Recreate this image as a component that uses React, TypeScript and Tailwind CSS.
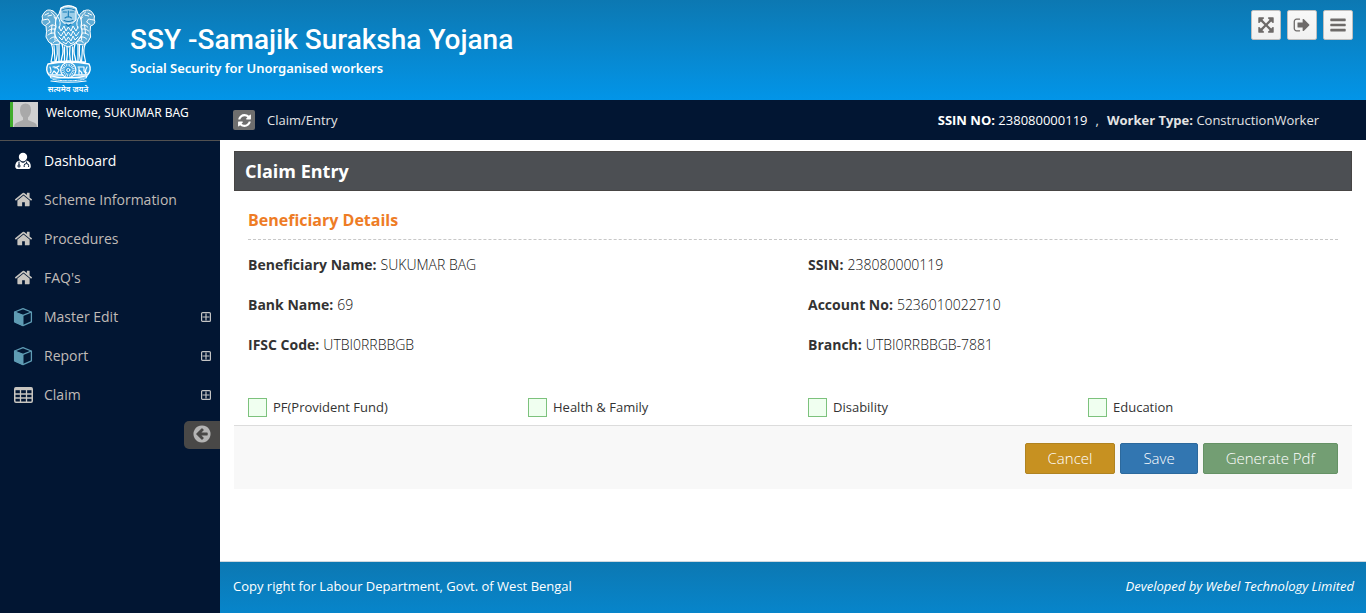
import React from "react";

const ICONS = {
  home: "M1472 992v480q0 26-19 45t-45 19h-384v-384h-256v384h-384q-26 0-45-19t-19-45v-480q0-1 .5-3t.5-3l575-474 575 474q1 2 1 6zm223-69l-62 74q-8 9-21 11h-3q-13 0-21-7l-692-577-692 577q-12 8-24 7-13-2-21-11l-62-74q-8-10-7-23.5t11-21.5l719-599q32-26 76-26t76 26l244 204v-195q0-14 9-23t23-9h192q14 0 23 9t9 23v408l219 182q10 8 11 21.5t-7 23.5z",
  refresh:
    "M1639 1056q0 5-1 7-64 268-268 434.5t-478 166.5q-146 0-282.5-55t-243.5-157l-129 129q-19 19-45 19t-45-19-19-45v-448q0-26 19-45t45-19h448q26 0 45 19t19 45-19 45l-137 137q71 66 161 102t187 36q134 0 250-65t186-179q11-17 53-117 8-23 30-23h192q13 0 22.5 9.5t9.5 22.5zm25-800v448q0 26-19 45t-45 19h-448q-26 0-45-19t-19-45 19-45l138-138q-148-137-349-137-134 0-250 65t-186 179q-11 17-53 117-8 23-30 23h-199q-13 0-22.5-9.5t-9.5-22.5v-7q65-268 270-434.5t480-166.5q146 0 284 55.5t245 156.5l130-129q19-19 45-19t45 19 19 45z",
  back: "M1408 960v-128q0-26-19-45t-45-19h-502l189-189q19-19 19-45t-19-45l-91-91q-18-18-45-18t-45 18l-362 362-91 91q-18 18-18 45t18 45l91 91 362 362q18 18 45 18t45-18l91-91q18-18 18-45t-18-45l-189-189h502q26 0 45-19t19-45zm256-64q0 209-103 385.5t-279.5 279.5-385.5 103-385.5-103-279.5-279.5-103-385.5 103-385.5 279.5-279.5 385.5-103 385.5 103 279.5 279.5 103 385.5z",
  expand:
    "M1411 541l-355 355 355 355 144-144q29-31 70-14 39 17 39 59v448q0 26-19 45t-45 19h-448q-42 0-59-40-17-39 14-69l144-144-355-355-355 355 144 144q31 30 14 69-17 40-59 40h-448q-26 0-45-19t-19-45v-448q0-42 40-59 39-17 69 14l144 144 355-355-355-355-144 144q-19 19-45 19-12 0-24-5-40-17-40-59v-448q0-26 19-45t45-19h448q42 0 59 40 17 39-14 69l-144 144 355 355 355-355-144-144q-31-30-14-69 17-40 59-40h448q26 0 45 19t19 45v448q0 42-39 59-13 5-25 5-26 0-45-19z",
  signOut:
    "M704 1440q0 4 1 20t.5 26.5-3 23.5-10 19.5-20.5 6.5h-320q-119 0-203.5-84.5t-84.5-203.5v-704q0-119 84.5-203.5t203.5-84.5h320q13 0 22.5 9.5t9.5 22.5q0 4 1 20t.5 26.5-3 23.5-10 19.5-20.5 6.5h-320q-66 0-113 47t-47 113v704q0 66 47 113t113 47h312l11.5 1 11.5 3 8 5.5 7 9 2 13.5zm928-544q0 26-19 45l-544 544q-19 19-45 19t-45-19-19-45v-288h-448q-26 0-45-19t-19-45v-384q0-26 19-45t45-19h448v-288q0-26 19-45t45-19 45 19l544 544q19 19 19 45z",
  bars: "M1664 1344v128q0 26-19 45t-45 19h-1408q-26 0-45-19t-19-45v-128q0-26 19-45t45-19h1408q26 0 45 19t19 45zm0-512v128q0 26-19 45t-45 19h-1408q-26 0-45-19t-19-45v-128q0-26 19-45t45-19h1408q26 0 45 19t19 45zm0-512v128q0 26-19 45t-45 19h-1408q-26 0-45-19t-19-45v-128q0-26 19-45t45-19h1408q26 0 45 19t19 45z",
};

function Icon({ name, className }: { name: keyof typeof ICONS; className: string }) {
  return (
    <svg viewBox="0 0 1792 1792" className={className} fill="currentColor" aria-hidden="true">
      <path d={ICONS[name]} />
    </svg>
  );
}

function DoctorIcon() {
  return (
    <svg viewBox="0 0 18 18" className="size-[18px] text-white" fill="none" stroke="currentColor" aria-hidden="true">
      <circle cx="9" cy="5" r="4.2" fill="currentColor" stroke="none" />
      <path d="M5.4 8.4Q1.2 9.4 1.2 14.2Q1.2 17 4 17H14Q16.8 17 16.8 14.2Q16.8 9.4 12.6 8.4Q9 11 5.4 8.4Z" fill="currentColor" stroke="none" />
      <g stroke="#021633" strokeWidth="1">
        <path d="M5 9.6V13" />
        <circle cx="5" cy="14" r="1.1" />
        <path d="M12.6 9.6V11.4M10.2 15V13.4Q10.2 11.6 12.4 11.6T14.6 13.4V15" />
        <path d="M6.6 9.4Q9 11.4 11.4 9.4" />
      </g>
    </svg>
  );
}

function CubeIcon() {
  return (
    <svg viewBox="0 0 20 20" className="size-5 text-[#5f9cb4]" fill="none" stroke="currentColor" strokeLinejoin="round" aria-hidden="true">
      <path d="M10 1.6L18.4 5V14.8L10 18.6L1.6 14.8V5Z" strokeWidth="1.3" />
      <path d="M1.6 5L10 8.4L18.4 5" strokeWidth="1.3" />
      <path d="M1.6 5.2L10 8.6V18.6L1.6 14.8Z" fill="currentColor" strokeWidth="1" />
    </svg>
  );
}

function TableIcon() {
  return (
    <svg viewBox="0 0 19 16" className="h-4 w-[19px] text-[#c8c5c0]" fill="none" stroke="currentColor" aria-hidden="true">
      <rect x="0.75" y="0.75" width="17.5" height="14.5" rx="1.2" strokeWidth="1.5" />
      <path d="M1 2H18" strokeWidth="2.4" />
      <path d="M1 7H18M1 11H18M6.5 3V15M12.5 3V15" strokeWidth="1.3" />
    </svg>
  );
}

function PlusBox() {
  return (
    <svg viewBox="0 0 10 10" className="size-2.5 text-[#c4c4c4]" fill="none" stroke="currentColor" aria-hidden="true">
      <rect x="0.6" y="0.6" width="8.8" height="8.8" rx="1" strokeWidth="1.2" />
      <path d="M5 1.5V8.500M1.5 5H8.500" strokeWidth="1.2" />
    </svg>
  );
}

function SideLion() {
  return (
    <>
      <path d="M23 11Q17 8 14 13Q11 16 12.5 19Q10 24 16 26Q17 32 16 37Q18 43 23 45L30 44L31 22Q27 13 23 11Z" fill="#fff" fillOpacity=".35" strokeWidth="1" />
      <path d="M15 15L19 13M13 20L18 19L20 22L16 25M18 16L22 15M21 12Q26 16 26 21M24 17Q28 22 27 26M19 27Q23 23 26 27M18 31Q23 27 28 31M18 35Q23 31 29 35M20 39Q24 35 29 39M23 43Q26 39 30 42M22 25L21 34M25 28L25 40" strokeWidth="1" strokeDasharray="1.6 .7" />
      <path d="M21 43Q24 50 22 57L21 62H26Q28 54 27 45M24 46L25 61" strokeWidth="1.2" />
    </>
  );
}

function Emblem() {
  return (
    <svg viewBox="0 0 80 100" className="h-[100px] w-20" fill="none" stroke="#fff" strokeLinecap="round" strokeLinejoin="round" role="img" aria-label="State emblem">
      <SideLion />
      <g transform="translate(76.6 0) scale(-1 1)">
        <SideLion />
      </g>
      <path d="M31 8Q38.300 3.500 46 8L48 14Q53 20 51 27Q54 34 49 39Q46 44 38.300 47Q30 44 27 39Q23 34 26 27Q24 20 29 14Z" fill="#4aa6d8" strokeWidth="1.100" />
      <path d="M31 8Q38.300 3.500 46 8L46 20Q43 24 38.300 24Q33 24 31 20Z" fill="#fff" fillOpacity=".45" strokeWidth="1" />
      <path d="M32 10Q38 7 45 10M33 12H36.500M40 12H44M38.300 11V17M35 18Q38.300 15.500 41.500 18M34 20.500Q38.300 22.500 43 20.500M36 24L38.300 26L41 24" stroke="#1178b4" strokeWidth="1.100" />
      <path d="M28 17Q32 23 29 28M49 17Q45 23 48 28M29 27L31 31L34 26L36 31L38.300 27L41 31L43 26L46 31L48 27M28 32L31 36L34 31L36 36L38.300 32L41 36L43 31L46 36L49 32M29 37L32 40L34 36L36 41L38.300 37L41 41L43 36L45 40L48 37M33 42L36 44L38.300 41L41 44L44 42" strokeWidth="1" />
      <path d="M32 44Q34 51 32 57L31 62H36.500Q38 54 37 47M45 44Q43 51 45 57L46 62H40.500Q39 54 40 47M34.500 47V60M42.500 47V60M29 45V61M48 45V61" strokeWidth="1.300" />
      <path d="M22 62.500Q38 59.500 55 62.500" strokeWidth="1.500" />
      <path d="M18 64Q15 70 19 75L57.500 75Q62 70 59 64Q38 60 18 64Z" fill="#fff" fillOpacity=".2" strokeWidth="1.400" />
      <circle cx="38.300" cy="70" r="7.600" fill="#2a9ada" strokeWidth="1.300" />
      <circle cx="38.300" cy="70" r="5" strokeWidth="3" strokeDasharray=".7 .9" strokeLinecap="butt" />
      <circle cx="38.300" cy="70" r="1.600" strokeWidth="1" />
      <path d="M20 67Q22 72 20 73M23 67Q26 66 29 70L27 74L24 71L22 74M25 68L29 66M57 67Q54 72 57 73M48 67H54V71L56 74M49 68V74M49 70Q52 72 52 74" strokeWidth="1.200" />
      <path d="M20 76Q38 79 57 76L56 78H21ZM21 81Q38 83.500 56 81" strokeWidth="1.200" />
      <path d="M23 79.500Q38 82 54 79.500" strokeWidth="1" strokeDasharray="1.500 1" />
      <text x="38" y="92" textAnchor="middle" fill="#fff" stroke="none" className="font-['Noto_Sans_Devanagari','Noto_Sans',sans-serif] text-[8px] font-semibold">
        सत्यमेव जयते
      </text>
    </svg>
  );
}

const toolButton =
  "flex size-[30px] items-center justify-center rounded-[2px] border border-[#bfbfbf] bg-linear-to-b from-[#f8f8f8] to-[#f1f1f1] text-[#6d6a69]";

const menu = [
  { label: "Dashboard", icon: <DoctorIcon />, active: true },
  { label: "Scheme Information", icon: <Icon name="home" className="size-[19px] text-[#c8c5c0]" /> },
  { label: "Procedures", icon: <Icon name="home" className="size-[19px] text-[#c8c5c0]" /> },
  { label: "FAQ's", icon: <Icon name="home" className="size-[19px] text-[#c8c5c0]" /> },
  { label: "Master Edit", icon: <CubeIcon />, expandable: true },
  { label: "Report", icon: <CubeIcon />, expandable: true },
  { label: "Claim", icon: <TableIcon />, expandable: true },
];

const details = [
  ["Beneficiary Name:", "SUKUMAR BAG"],
  ["SSIN:", "238080000119"],
  ["Bank Name:", "69"],
  ["Account No:", "5236010022710"],
  ["IFSC Code:", "UTBI0RRBBGB"],
  ["Branch:", "UTBI0RRBBGB-7881"],
];

const schemes = ["PF(Provident Fund)", "Health & Family", "Disability", "Education"];

function Header() {
  return (
    <header className="flex h-[100px] items-start justify-between bg-linear-to-b from-[#0c78b2] to-[#0295e8] pr-[13px] pl-[30px] text-white">
      <div className="flex">
        <Emblem />
        <div className="pt-5 pl-5">
          <h1 className="font-[Roboto,sans-serif] text-[28px] leading-[40px] font-medium">SSY -Samajik Suraksha Yojana</h1>
          <p className="font-['Noto_Sans',sans-serif] text-[13px] leading-4 font-semibold">Social Security for Unorganised workers</p>
        </div>
      </div>
      <div className="flex gap-1.5 pt-2.5">
        <button type="button" aria-label="Full screen" className={toolButton}>
          <Icon name="expand" className="size-[18px]" />
        </button>
        <button type="button" aria-label="Sign out" className={toolButton}>
          <Icon name="signOut" className="size-[18px]" />
        </button>
        <button type="button" aria-label="Toggle menu" className={toolButton}>
          <Icon name="bars" className="size-[18px]" />
        </button>
      </div>
    </header>
  );
}

function Sidebar() {
  return (
    <aside className="flex w-[220px] shrink-0 flex-col bg-[#021633]">
      <a href="#profile" className="flex h-[41px] items-start border-b border-[#525151] pt-0.5 pl-2.5 text-white">
        <svg viewBox="0 0 28 25" className="h-[25px] w-7" aria-hidden="true">
          <path d="M0 0H28V25H0Z" fill="#d0d0d0" />
          <path d="M15.500 1.500Q21 1.500 21 8Q21 13 18 15.500V18L25 21Q27 22 27 25H4Q4 22 6 21L13 18V15.500Q10 13 10 8Q10 1.500 15.500 1.500Z" fill="#a9a9a9" />
          <path d="M0 0H3V25H0Z" fill="#40ac2b" />
        </svg>
        <span className="pl-2 font-['Noto_Sans',sans-serif] text-[12px] leading-[22px]">Welcome, SUKUMAR BAG</span>
      </a>
      <nav>
        <ul>
          {menu.map((item) => (
            <li key={item.label}>
              <a
                href="#menu"
                className={`flex h-[39px] items-center pr-[9px] pl-[13px] text-[14px] ${item.active ? "text-white" : "text-[#c0bbb7]"}`}
              >
                <span className="flex w-5 justify-center">{item.icon}</span>
                <span className="flex-1 pl-[11px]">{item.label}</span>
                {item.expandable && <PlusBox />}
              </a>
            </li>
          ))}
        </ul>
      </nav>
      <button
        type="button"
        aria-label="Collapse menu"
        className="mt-[7px] flex h-7 w-9 items-center justify-center self-end rounded-l-[5px] bg-[#494847] pb-0.5 text-[#b4b4b4]"
      >
        <Icon name="back" className="size-5" />
      </button>
    </aside>
  );
}

function Ribbon() {
  return (
    <div className="flex h-10 items-center justify-between bg-[#021633] pr-[47px] pl-[13px] text-[13px] text-[#e4e4e4]">
      <div className="flex items-center gap-3">
        <button type="button" aria-label="Refresh" className="flex h-5 w-[22px] items-center justify-center rounded-[2px] bg-[#6e6e6e] text-white">
          <Icon name="refresh" className="size-[15px]" />
        </button>
        <span className="pt-px">Claim/Entry</span>
      </div>
      <p className="flex pt-px">
        <span className="text-white">
          <b>SSIN NO:</b> 238080000119
        </span>
        <span className="px-2">,</span>
        <span>
          <b>Worker Type:</b> ConstructionWorker
        </span>
      </p>
    </div>
  );
}

function ClaimForm() {
  return (
    <form className="mx-3.5 mt-[11px]">
      <h2 className="flex h-10 items-center border border-[#474544] bg-[#4c4f53] px-2.5 text-[18px] font-bold text-white">Claim Entry</h2>
      <div className="px-3.5 pt-[17px]">
        <h3 className="border-b border-dashed border-[#c8c8c8] pb-[7px] text-[16px] leading-6 font-bold text-[#ee7c25]">Beneficiary Details</h3>
        <dl className="grid grid-cols-[560px_1fr] gap-y-5 pt-[15px] text-[14px] leading-5 text-[#333]">
          {details.map(([name, value]) => (
            <div key={name} className="flex gap-1">
              <dt className="font-bold">{name}</dt>
              <dd className="font-light text-[#111]">{value}</dd>
            </div>
          ))}
        </dl>
        <div className="mt-[43px] -mr-[30px] grid grid-cols-4 pb-[7px] text-[13px] text-[#333]">
          {schemes.map((scheme) => (
            <label key={scheme} className="flex items-center gap-1.5">
              <input type="checkbox" className="size-[19px] appearance-none border border-[#7dc27d] bg-[#f0fff0] checked:bg-[#7dc27d]" />
              {scheme}
            </label>
          ))}
        </div>
      </div>
      <div className="flex justify-end gap-[5px] border-t border-[#dcdcdc] bg-[#f8f8f8] px-3.5 pt-[17px] pb-[15px] text-[15px] font-light text-white">
        <button type="button" className="h-[31px] rounded-[2px] border border-[#b08321] bg-[#c79121] px-[22px]">Cancel</button>
        <button type="submit" className="h-[31px] rounded-[2px] border border-[#2c699d] bg-[#3276b1] px-[22px]">Save</button>
        <button type="button" className="h-[31px] rounded-[2px] border border-[#659265] bg-[#739e73] px-[22px]">Generate Pdf</button>
      </div>
    </form>
  );
}

export default function App() {
  return (
    <div className="flex min-h-screen flex-col bg-white font-['Open_Sans',sans-serif]">
      <Header />
      <div className="flex flex-1">
        <Sidebar />
        <main className="flex min-w-0 flex-1 flex-col">
          <Ribbon />
          <ClaimForm />
          <footer className="mt-auto flex h-[52px] items-center justify-between border-t border-[#cfd8de] bg-linear-to-b from-[#0c78b2] to-[#0785cb] pr-3 pb-0.5 pl-[13px] text-[13px] text-white">
            <span>Copy right for Labour Department, Govt. of West Bengal</span>
            <i>Developed by Webel Technology Limited</i>
          </footer>
        </main>
      </div>
    </div>
  );
}
